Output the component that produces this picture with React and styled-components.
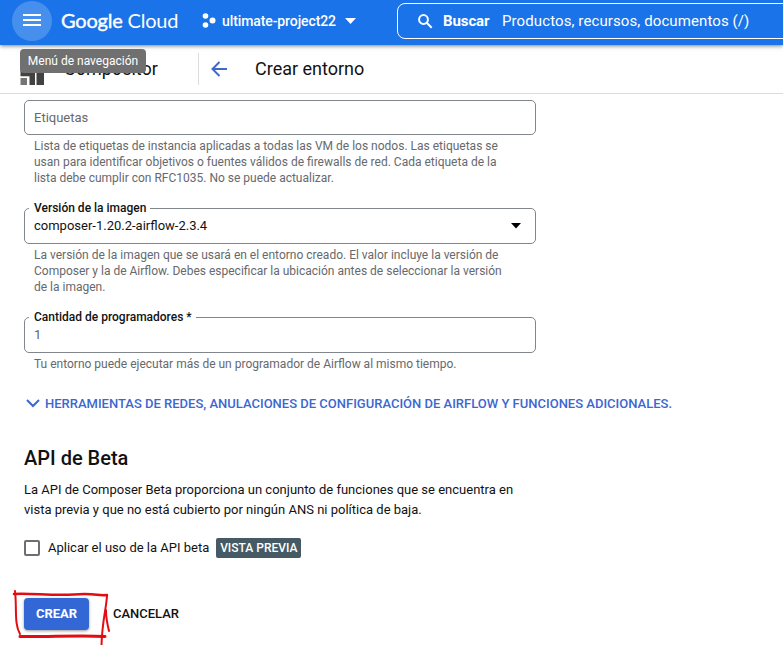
import React from "react";
import styled, { createGlobalStyle } from "styled-components";

const GlobalStyle = createGlobalStyle`
  *, *::before, *::after { box-sizing: border-box; }
  body {
    margin: 0;
    background: #fff;
    color: #121212;
    font-family: Roboto, "Liberation Sans", sans-serif;
    overflow: hidden;
  }
`;

const Page = styled.div`
  width: 100%;
  height: 645px;
  display: flex;
  flex-direction: column;
  overflow: hidden;
`;

const TopBar = styled.header`
  flex: none;
  position: relative;
  z-index: 2;
  height: 45px;
  display: flex;
  align-items: flex-start;
  padding-left: 12px;
  background: #1a73e8;
  color: #fff;
  box-shadow: 0 1px 4px rgba(0, 0, 0, 0.5);
`;

const MenuButton = styled.button`
  flex: none;
  position: relative;
  width: 40px;
  height: 40px;
  margin-top: 1px;
  display: flex;
  align-items: center;
  justify-content: center;
  padding: 0 0 2px;
  border: 0;
  border-radius: 50%;
  background: #478fed;
  color: #fff;
  svg { display: block; }
`;

const Tooltip = styled.span`
  position: absolute;
  left: 8px;
  top: 48px;
  width: 126px;
  height: 24px;
  border-radius: 4px;
  background: #707070;
  color: #fff;
  font: 400 12px/24px Roboto, sans-serif;
  text-align: center;
  white-space: nowrap;
`;

const Logo = styled.div`
  flex: none;
  width: 141px;
  padding: 6px 0 0 9px;
  font: 400 20px/28px Lato, sans-serif;
  letter-spacing: -0.2px;
  white-space: nowrap;
  b { font-weight: 400; -webkit-text-stroke: 0.4px #fff; }
`;

const ProjectPicker = styled.div`
  flex: none;
  width: 204px;
  height: 42px;
  display: flex;
  align-items: center;
  padding-left: 9px;
  font-size: 14px;
  font-weight: 500;
  letter-spacing: -0.1px;
  svg { flex: none; display: block; }
  span { width: 119px; margin: 0 4px 0 6px; white-space: nowrap; }
`;

const SearchBox = styled.div`
  flex: none;
  width: 410px;
  height: 36px;
  margin-top: 3px;
  display: flex;
  align-items: center;
  padding-left: 20px;
  border: 1px solid #fff;
  border-radius: 8px;
  font-size: 15px;
  white-space: nowrap;
  svg { display: block; flex: none; }
  b { margin-left: 10px; width: 59px; font-weight: 700; letter-spacing: -0.1px; }
  span { letter-spacing: 0.1px; }
`;

const SubHeader = styled.div`
  flex: none;
  height: 49px;
  display: flex;
  align-items: center;
  padding-bottom: 1px;
  border-bottom: 1px solid #dadce0;
  font-size: 18px;
  svg { display: block; flex: none; }
`;

const Product = styled.div`
  width: 199px;
  height: 32px;
  display: flex;
  align-items: center;
  padding-left: 20px;
  border-right: 1px solid #dadce0;
  span { margin-left: 20px; }
`;

const BackArrow = styled.svg`
  margin-left: 12px;
`;

const PageTitle = styled.h1`
  margin: 0 0 0 28px;
  font-size: 18px;
  font-weight: 400;
`;

const Form = styled.main`
  flex: 1;
  display: flex;
  flex-direction: column;
  align-items: flex-start;
  padding: 6px 0 0 24px;
`;

const Field = styled.div`
  position: relative;
  width: 512px;
  height: ${(p) => p.$height || 36}px;
  display: flex;
  align-items: center;
  justify-content: space-between;
  padding: 0 14px 1px 9px;
  border: 1px solid #80868b;
  border-radius: 5px;
  color: ${(p) => p.$color || "#121212"};
  font-size: 13px;
`;

const FieldLabel = styled.label`
  position: absolute;
  left: 4px;
  top: -9px;
  padding: 0 4px 0 5px;
  background: #fff;
  color: #121212;
  font-size: 12px;
  font-weight: 500;
  line-height: 16px;
  white-space: nowrap;
`;

const Hint = styled.p`
  margin: 3px 0 ${(p) => p.$after}px 10px;
  color: #66696d;
  font-size: 12px;
  line-height: 16px;
  white-space: nowrap;
`;

const Expander = styled.button`
  height: 20px;
  display: flex;
  align-items: center;
  padding: 0 0 0 2px;
  border: 0;
  background: none;
  color: #3c67d1;
  font: 500 13px/20px Roboto, sans-serif;
  white-space: nowrap;
  svg { display: block; margin: -2px 5px 0 0; }
`;

const SectionTitle = styled.h2`
  margin: 31px 0 9px;
  font-size: 20px;
  font-weight: 500;
  line-height: 26px;
`;

const Paragraph = styled.p`
  margin: 0;
  font-size: 13px;
  line-height: 20px;
  white-space: nowrap;
`;

const CheckRow = styled.label`
  height: 20px;
  margin-top: 18px;
  display: flex;
  align-items: center;
  font-size: 13px;
  line-height: 18px;
  white-space: nowrap;
`;

const Box = styled.span`
  width: 16px;
  height: 16px;
  margin-right: 8px;
  border: 2px solid #6b6f73;
  border-radius: 2px;
`;

const Badge = styled.span`
  width: 85px;
  height: 20px;
  margin-left: 7px;
  border-radius: 2px;
  background: #455a64;
  color: #fff;
  font-size: 12px;
  font-weight: 500;
  line-height: 20px;
  text-align: center;
`;

const Actions = styled.div`
  position: relative;
  display: flex;
  margin-top: 40px;
`;

const Button = styled.button`
  width: ${(p) => (p.$primary ? 65 : 114)}px;
  height: 32px;
  padding: 0;
  border: 0;
  border-radius: 4px;
  background: ${(p) => (p.$primary ? "#3367d6" : "transparent")};
  color: ${(p) => (p.$primary ? "#fff" : "#121212")};
  box-shadow: ${(p) => (p.$primary ? "0 1px 3px rgba(0, 0, 0, 0.4)" : "none")};
  font: ${(p) => (p.$primary ? 700 : 500)} 13px/32px Roboto, sans-serif;
`;

const Scribble = styled.svg`
  position: absolute;
  left: -12px;
  top: -10px;
  overflow: visible;
  pointer-events: none;
`;

export default function App() {
  return (
    <>
      <GlobalStyle />
      <Page>
        <TopBar>
          <MenuButton aria-label="Menú de navegación">
            <svg width="18" height="12" fill="currentColor">
              <path d="M0 0h18v2H0zM0 5h18v2H0zM0 10h18v2H0z" />
            </svg>
            <Tooltip>Menú de navegación</Tooltip>
          </MenuButton>
          <Logo><b>Google</b> Cloud</Logo>
          <ProjectPicker>
            <svg width="14" height="16" fill="currentColor">
              <circle cx="3.5" cy="3" r="2.8" />
              <circle cx="3.5" cy="12" r="2.8" />
              <circle cx="10.5" cy="7.5" r="3" />
            </svg>
            <span>ultimate-project22</span>
            <svg width="11" height="6" fill="currentColor"><path d="M0 0h11L5.5 6z" /></svg>
          </ProjectPicker>
          <SearchBox>
            <svg width="15" height="15" fill="none" stroke="currentColor" strokeWidth="2">
              <circle cx="5.5" cy="5.5" r="4.4" />
              <path d="M8.7 8.7l5 5" />
            </svg>
            <b>Buscar</b>
            <span>Productos, recursos, documentos (/)</span>
          </SearchBox>
        </TopBar>

        <SubHeader>
          <Product>
            <svg width="24" height="32">
              <path fill="#424242" d="M.5 12H15v20H9.500v-8.800H.5zM16.500 12H24v20h-7.500z" />
              <path fill="#757575" d="M.5 25h6.500v7H.5z" />
            </svg>
            <span>Compositor</span>
          </Product>
          <BackArrow width="16" height="16" fill="none" stroke="#4169cd" strokeWidth="2">
            <path d="M16 8H2M8.500 1L1.500 8l7 7" />
          </BackArrow>
          <PageTitle>Crear entorno</PageTitle>
        </SubHeader>

        <Form>
          <Field $height={35} $color="#66696d">Etiquetas</Field>
          <Hint $after={22}>
            Lista de etiquetas de instancia aplicadas a todas las VM de los nodos. Las etiquetas se<br />
            usan para identificar objetivos o fuentes válidos de firewalls de red. Cada etiqueta de la<br />
            lista debe cumplir con RFC1035. No se puede actualizar.
          </Hint>
          <Field>
            <FieldLabel>Versión de la imagen</FieldLabel>
            composer-1.20.2-airflow-2.3.4
            <svg width="10" height="6"><path d="M0 0h10L5 5.500z" /></svg>
          </Field>
          <Hint $after={22}>
            La versión de la imagen que se usará en el entorno creado. El valor incluye la versión de<br />
            Composer y la de Airflow. Debes especificar la ubicación antes de seleccionar la versión<br />
            de la imagen.
          </Hint>
          <Field $color="#5f6368">
            <FieldLabel>Cantidad de programadores *</FieldLabel>
            1
          </Field>
          <Hint $after={22}>Tu entorno puede ejecutar más de un programador de Airflow al mismo tiempo.</Hint>
          <Expander>
            <svg width="14" height="9" fill="none" stroke="currentColor" strokeWidth="2">
              <path d="M1 1l6 6 6-6" />
            </svg>
            HERRAMIENTAS DE REDES, ANULACIONES DE CONFIGURACIÓN DE AIRFLOW Y FUNCIONES ADICIONALES.
          </Expander>
          <SectionTitle>API de Beta</SectionTitle>
          <Paragraph>
            La API de Composer Beta proporciona un conjunto de funciones que se encuentra en<br />
            vista previa y que no está cubierto por ningún ANS ni política de baja.
          </Paragraph>
          <CheckRow>
            <Box />
            Aplicar el uso de la API beta
            <Badge>VISTA PREVIA</Badge>
          </CheckRow>
          <Actions>
            <Button $primary>CREAR</Button>
            <Button>CANCELAR</Button>
            <Scribble width="104" height="60" fill="none" stroke="#e40c10" strokeLinecap="round" strokeLinejoin="round">
              <path strokeWidth="2.5" d="M2 6C20 5 40 8 62 6.500S85 8 95 7" />
              <path strokeWidth="2" d="M3 3C5 20 2 36 8 46" />
              <path strokeWidth="3" d="M8 48.500C35 49 68 47 93 48.500" />
              <path strokeWidth="2" d="M95 8C94 22 90 34 89.500 58M94 22C94 30 95 35 97 43" />
            </Scribble>
          </Actions>
        </Form>
      </Page>
    </>
  );
}
